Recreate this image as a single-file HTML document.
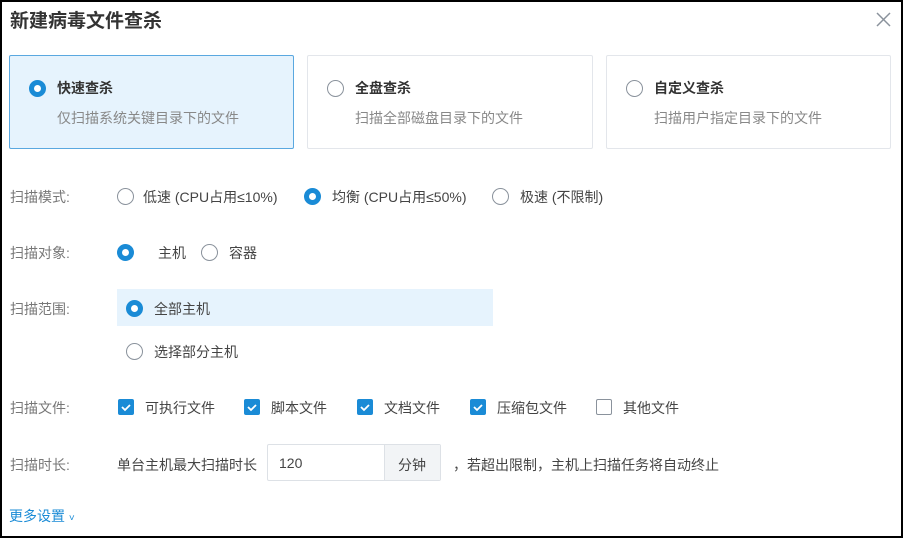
<!DOCTYPE html>
<html><head><meta charset="utf-8"><style>
*{box-sizing:border-box;margin:0;padding:0}
body{width:903px;height:538px;background:#000;font-family:"Liberation Sans","Noto Sans CJK SC",sans-serif;position:relative;overflow:hidden}
.page{position:absolute;left:2px;top:2px;width:899px;height:534px;background:#fff}
.a{position:absolute;white-space:nowrap}
.title{left:8px;top:4px;font-size:19px;font-weight:bold;color:#333}
.card{position:absolute;top:53px;height:94px;border:1px solid #e3e6eb;border-radius:2px;background:#fff}
.card.on{background:#e6f3fd;border-color:#5aa8e0}
.card b{position:absolute;left:47px;top:22px;font-size:14px;color:#333}
.card span{position:absolute;left:47px;top:52px;font-size:14px;color:#888}
.rad{position:absolute;width:17px;height:17px;border:1.5px solid #8a929c;border-radius:50%;background:#fff}
.rad.on{border:5px solid #1a8bd6}
.lab{font-size:14px;color:#777;left:8px}
.t{font-size:14px;color:#444}
.chk{position:absolute;width:16px;height:16px;border-radius:2px;background:#1a8bd6}
.chk.off{background:#fff;border:1.5px solid #8a929c}
</style></head><body><div class="page">
<div class="a title">新建病毒文件查杀</div>
<svg class="a" style="left:874px;top:10px" width="15" height="15"><path d="M1 1L14 14M14 1L1 14" stroke="#8a929c" stroke-width="1.5"/></svg>

<div class="card on" style="left:7px;width:285px"><div class="rad on" style="left:19px;top:24px"></div><b>快速查杀</b><span>仅扫描系统关键目录下的文件</span></div>
<div class="card" style="left:305px;width:286px"><div class="rad" style="left:19px;top:24px"></div><b>全盘查杀</b><span>扫描全部磁盘目录下的文件</span></div>
<div class="card" style="left:604px;width:285px"><div class="rad" style="left:19px;top:24px"></div><b>自定义查杀</b><span>扫描用户指定目录下的文件</span></div>

<div class="a lab" style="top:185px">扫描模式:</div>
<div class="rad" style="left:115px;top:186px"></div><div class="a t" style="left:141px;top:185px">低速 (CPU占用≤10%)</div>
<div class="rad on" style="left:302px;top:186px"></div><div class="a t" style="left:330px;top:185px">均衡 (CPU占用≤50%)</div>
<div class="rad" style="left:490px;top:186px"></div><div class="a t" style="left:518px;top:185px">极速 (不限制)</div>

<div class="a lab" style="top:241px">扫描对象:</div>
<div class="rad on" style="left:115px;top:242px"></div><div class="a t" style="left:156px;top:241px">主机</div>
<div class="rad" style="left:199px;top:242px"></div><div class="a t" style="left:227px;top:241px">容器</div>

<div class="a lab" style="top:297px">扫描范围:</div>
<div class="a" style="left:115px;top:287px;width:376px;height:37px;background:#e6f3fd"></div>
<div class="rad on" style="left:124px;top:298px"></div><div class="a t" style="left:152px;top:297px">全部主机</div>
<div class="rad" style="left:124px;top:341px"></div><div class="a t" style="left:152px;top:340px">选择部分主机</div>

<div class="a lab" style="top:396px">扫描文件:</div>
<div class="chk" style="left:116px;top:397px"><svg width="16" height="16"><path d="M4 8l3 3 5-5" stroke="#fff" stroke-width="1.8" fill="none"/></svg></div><div class="a t" style="left:143px;top:396px">可执行文件</div>
<div class="chk" style="left:242px;top:397px"><svg width="16" height="16"><path d="M4 8l3 3 5-5" stroke="#fff" stroke-width="1.8" fill="none"/></svg></div><div class="a t" style="left:269px;top:396px">脚本文件</div>
<div class="chk" style="left:355px;top:397px"><svg width="16" height="16"><path d="M4 8l3 3 5-5" stroke="#fff" stroke-width="1.8" fill="none"/></svg></div><div class="a t" style="left:382px;top:396px">文档文件</div>
<div class="chk" style="left:468px;top:397px"><svg width="16" height="16"><path d="M4 8l3 3 5-5" stroke="#fff" stroke-width="1.8" fill="none"/></svg></div><div class="a t" style="left:495px;top:396px">压缩包文件</div>
<div class="chk off" style="left:594px;top:397px"></div><div class="a t" style="left:621px;top:396px">其他文件</div>

<div class="a lab" style="top:453px">扫描时长:</div>
<div class="a t" style="left:115px;top:453px">单台主机最大扫描时长</div>
<div class="a" style="left:265px;top:442px;width:174px;height:37px;border:1px solid #dde1e6;border-radius:2px"></div>
<div class="a t" style="left:277px;top:453px">120</div>
<div class="a" style="left:382px;top:443px;width:56px;height:35px;background:#f2f4f6;border-left:1px solid #dde1e6"></div>
<div class="a t" style="left:396px;top:453px">分钟</div>
<div class="a t" style="left:451px;top:453px">，若超出限制，主机上扫描任务将自动终止</div>

<div class="a" style="left:7px;top:504px;font-size:14px;color:#1a8bd6">更多设置 <span style="font-size:10px">˅</span></div>
</div></body></html>
